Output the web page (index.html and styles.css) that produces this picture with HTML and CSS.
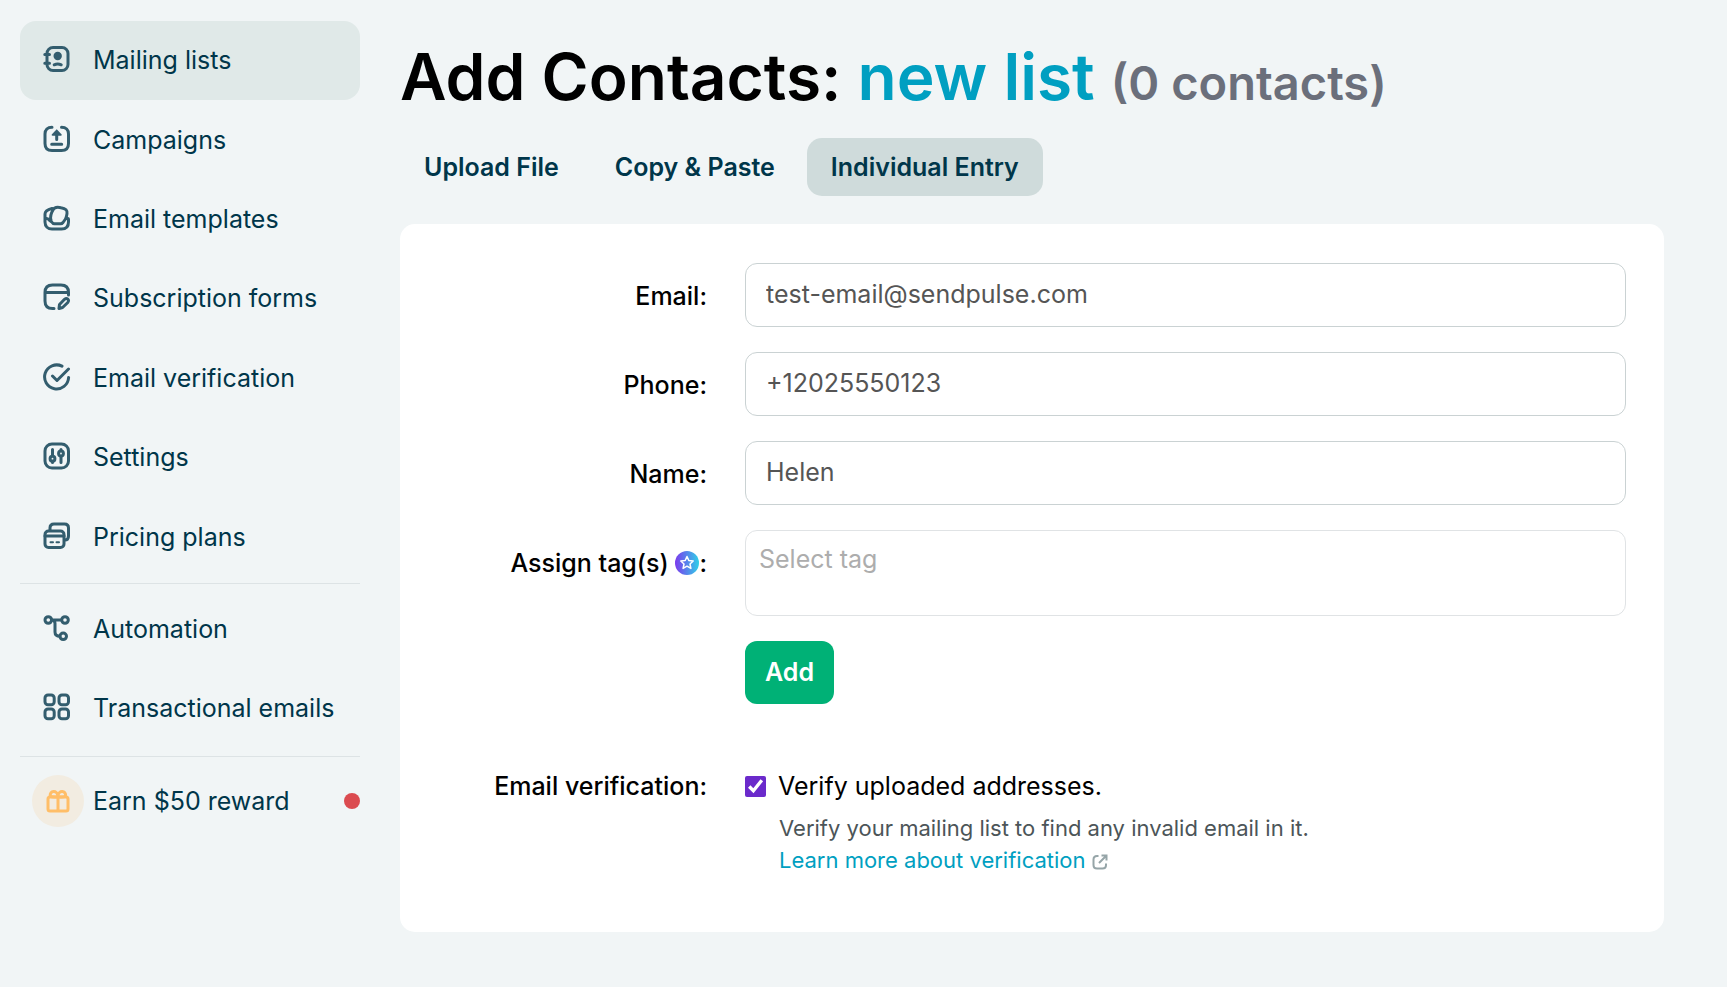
FILE: index.html
```html
<!DOCTYPE html>
<html lang="en">
<head>
  <meta charset="UTF-8">
  <meta name="viewport" content="width=device-width, initial-scale=1.0">
  <title>Add Contacts</title>
  <link rel="stylesheet" href="styles.css">
</head>
<body>
  <div class="layout">
    <nav class="sidebar">
      <div class="nav-group nav-main">
        <a href="#" class="nav-item active">
          <svg class="icon" viewBox="0 0 28 28"><rect x="4" y="2.5" width="21" height="23" rx="6"/><path d="M1.8 9.5h4.7M1.8 18.3h4.7M11.2 19.8q3.5-1.8 7 0"/><circle class="fill" cx="14.7" cy="11" r="4.2"/></svg>
          <span>Mailing lists</span>
        </a>
        <a href="#" class="nav-item">
          <svg class="icon" viewBox="0 0 28 28"><path d="M9 2.3C4.5 2.3 2 5 2 9v9.5c0 4.5 2.5 7 7 7h9.5c4.5 0 7-2.5 7-7V9c0-4-2.5-6.7-7-6.7M13.7 8v6.5M8.7 19.2h10"/><path class="fill" d="M13.7 4.3l5 5.2q.3 1.3-1 1.3H9.7q-1.3 0-1-1.3z"/></svg>
          <span>Campaigns</span>
        </a>
        <a href="#" class="nav-item">
          <svg class="icon" viewBox="0 0 28 28"><path d="M2 15.5V10c0-3.5 3-4.5 7-5.5M2 15.5V18c0 4.5 3 7 7 7h9.5c4.5 0 7-2.5 7-7v-3c0-1-2-1.3-3 0l-2.5 3.5c-.8 1-1.5 1.3-2.5 1.3h-6c-1.5 0-2.2-.7-3-2L6.2 16C5 14 2 14 2 15.5M8 16c-1-3 .5-7.5 2-10 1.5-3.5 5-3 8-2.3 5 .8 6.5 2.5 6 6-.2 2-.7 3.5-1.5 5.3"/></svg>
          <span>Email templates</span>
        </a>
        <a href="#" class="nav-item">
          <svg class="icon" viewBox="0 0 28 28"><path d="M11 25.5H9.5c-4.8 0-7.5-2.7-7.5-7.5V9.5C2 4.7 4.7 2 9.5 2H18c4.8 0 7.5 2.7 7.5 7.5V12M2 9.5h23.5M16 25.5l.5-4 5-5.2c2.5-2 5.2.5 3.3 3.2l-5.2 5z"/></svg>
          <span>Subscription forms</span>
        </a>
        <a href="#" class="nav-item">
          <svg class="icon" viewBox="0 0 28 28"><path d="M19 3.2A12 12 0 1 0 25.6 14.5M9.5 13l4.5 4.5L25.5 6"/></svg>
          <span>Email verification</span>
        </a>
        <a href="#" class="nav-item">
          <svg class="icon" viewBox="0 0 28 28"><rect x="2" y="2" width="23.5" height="24" rx="7"/><path d="M9.5 7.5v6M9.5 19.5v1M18 7.5v1M18 14.5v6"/><circle cx="9.5" cy="16.7" r="2.4"/><circle cx="18" cy="11.5" r="2.4"/></svg>
          <span>Settings</span>
        </a>
        <a href="#" class="nav-item">
          <svg class="icon" viewBox="0 0 28 28"><path d="M7 8V6c0-2.5 1.5-4 4-4h10.5c2.5 0 4 1.5 4 4v8c0 2.5-1.3 4-3.7 4M2 14h19"/><rect x="2" y="9" width="19" height="16.5" rx="3.5"/><path class="thin" d="M7.5 20.3h2.5M13.5 20.3h2.5"/></svg>
          <span>Pricing plans</span>
        </a>
      </div>
      <div class="nav-group nav-extra">
        <a href="#" class="nav-item">
          <svg class="icon" viewBox="0 0 28 28"><circle cx="5.3" cy="6" r="3.3"/><circle cx="22" cy="6" r="3.3"/><circle cx="20.2" cy="22.3" r="3.3"/><path d="M8.6 6h10M9.5 6c2 .5 2.5 1.5 2.5 3.5v8.5c0 3 1.5 4.3 5 4.3"/></svg>
          <span>Automation</span>
        </a>
        <a href="#" class="nav-item">
          <svg class="icon" viewBox="0 0 28 28"><rect x="2" y="2" width="9.2" height="9.7" rx="3"/><rect x="16" y="2" width="9.5" height="9.7" rx="3"/><rect x="2" y="16" width="9.2" height="9.7" rx="3"/><rect x="16" y="16" width="9.5" height="9.7" rx="3"/></svg>
          <span>Transactional emails</span>
        </a>
      </div>
      <a href="#" class="nav-item reward">
        <span class="gift">
          <svg viewBox="0 0 24 24"><rect x="2" y="8" width="20" height="14" rx="2"/><path d="M12 8v14M11.5 8C9 8 5 8 4.2 7c-.7-5.5 7-6.5 7.6 0M12.2 8c2.5 0 6.5 0 7.4-1 .7-5.5-7-6.5-7.6 0"/></svg>
        </span>
        <span>Earn $50 reward</span>
        <span class="dot"></span>
      </a>
    </nav>

    <main class="content">
      <h1>Add Contacts: <span class="list-name">new list</span> <small>(0 contacts)</small></h1>

      <div class="tabs">
        <a href="#" class="tab">Upload File</a>
        <a href="#" class="tab">Copy &amp; Paste</a>
        <a href="#" class="tab active">Individual Entry</a>
      </div>

      <form class="card">
        <div class="form-row">
          <label for="email">Email:</label>
          <input class="field" type="text" id="email" value="test-email@sendpulse.com">
        </div>
        <div class="form-row">
          <label for="phone">Phone:</label>
          <input class="field" type="text" id="phone" value="+12025550123">
        </div>
        <div class="form-row">
          <label for="name">Name:</label>
          <input class="field" type="text" id="name" value="Helen">
        </div>
        <div class="form-row">
          <label for="tags">Assign tag(s)
            <svg class="star" viewBox="0 0 24 24">
              <defs>
                <linearGradient id="starGradient" x1="0" y1="0" x2="1" y2="0"><stop offset="0" stop-color="#7c3aed"/><stop offset="1" stop-color="#2fd0e8"/></linearGradient>
              </defs>
              <circle cx="12" cy="12" r="12" fill="url(#starGradient)"/>
              <path d="M12 5.5l1.8 4 4.4.5-3.2 3 .9 4.4-3.9-2.2-3.9 2.2.9-4.4-3.2-3 4.4-.5z" fill="none" stroke="#fff" stroke-width="1.5" stroke-linejoin="round"/>
            </svg>:</label>
          <textarea class="field tags" id="tags" placeholder="Select tag"></textarea>
        </div>
        <div class="form-row">
          <button type="button" class="btn-add">Add</button>
        </div>
        <div class="form-row verify">
          <span class="row-title">Email verification:</span>
          <div>
            <label class="check"><input type="checkbox" checked>Verify uploaded addresses.</label>
            <p class="help">Verify your mailing list to find any invalid email in it.<br>
              <a href="#">Learn more about verification</a>
              <svg class="external" viewBox="0 0 16 16"><path d="M6.5 2H5Q1.5 2 1.5 5.5v5.5Q1.5 14.5 5 14.5h5.5Q14 14.5 14 11V9.5M9.5 1.5h5v5M14.5 1.5L7 9"/></svg>
            </p>
          </div>
        </div>
      </form>
    </main>
  </div>
</body>
</html>
```

FILE: styles.css
```css
* {
  box-sizing: border-box;
}

body {
  margin: 0;
  background: #f1f5f6;
  color: #000;
  font-family: Inter, "Open Sans", sans-serif;
  font-size: 25px;
  line-height: 32px;
}

a {
  text-decoration: none;
}

.layout {
  display: flex;
  gap: 40px;
  padding: 21px 63px 55px 20px;
}

/* sidebar */
.sidebar {
  flex: 0 0 340px;
}

.nav-group {
  display: grid;
  grid-auto-rows: 1fr;
  border-bottom: 1px solid #dde3e5;
}

.nav-main {
  height: 563px;
  padding-bottom: 6px;
}

.nav-extra {
  height: 173px;
  padding: 6px 0 8px;
}

.nav-item {
  display: flex;
  align-items: center;
  gap: 22px;
  padding: 0 0 3px 23px;
  border-radius: 16px;
  color: #00364a;
  white-space: nowrap;
}

.nav-item.active {
  background: #e0e9e8;
}

.icon {
  flex: none;
  width: 28px;
  height: 28px;
  fill: none;
  stroke: #335d6e;
  stroke-width: 3;
  stroke-linecap: round;
  stroke-linejoin: round;
}

.icon + span {
  padding-top: 2px;
}

.icon .fill {
  fill: #335d6e;
  stroke: none;
}

.icon .thin {
  stroke-width: 2;
}

.nav-item.reward {
  gap: 9px;
  margin-top: 18px;
  padding: 0 0 0 12px;
}

.gift {
  display: flex;
  align-items: center;
  justify-content: center;
  width: 52px;
  height: 52px;
  border-radius: 50%;
  background: #f2ece1;
}

.gift svg {
  width: 24px;
  height: 24px;
  fill: none;
  stroke: #ffbe68;
  stroke-width: 3;
  stroke-linejoin: round;
}

.dot {
  width: 16px;
  height: 16px;
  margin-left: auto;
  border-radius: 50%;
  background: #db4b50;
}

/* content */
.content {
  flex: 1;
  min-width: 0;
}

h1 {
  margin: 15px 0 14px;
  font-size: 64px;
  font-weight: 600;
  line-height: 82px;
}

.list-name {
  color: #009fc1;
}

h1 small {
  color: #6b6f7b;
  font-size: 47px;
}

.tabs {
  display: flex;
  gap: 8px;
  margin-bottom: 28px;
}

.tab {
  padding: 13px 24px;
  border-radius: 15px;
  color: #00364a;
  font-weight: 600;
}

.tab.active {
  background: #cfdbdb;
}

.card {
  display: flex;
  flex-direction: column;
  gap: 25px;
  padding: 39px 38px 56px 0;
  border-radius: 15px;
  background: #fff;
}

.form-row {
  display: grid;
  grid-template-columns: 307px 1fr;
  column-gap: 38px;
}

.form-row > label,
.row-title {
  padding-top: 17px;
  font-weight: 500;
  text-align: right;
}

.field {
  width: 100%;
  height: 64px;
  padding: 0 20px 2px;
  border: 1px solid #cad2d3;
  border-radius: 12px;
  background: #fff;
  color: #555;
  font: inherit;
}

.tags {
  display: block;
  height: 86px;
  padding: 12px 13px;
  border-color: #e0e3e5;
  resize: none;
}

.tags::placeholder {
  color: #adadad;
}

.star {
  width: 24px;
  height: 24px;
  vertical-align: -3px;
}

.btn-add {
  grid-column: 2;
  justify-self: start;
  height: 63px;
  padding: 0 20px 2px;
  border: 0;
  border-radius: 12px;
  background: #00b176;
  color: #fff;
  font: inherit;
  font-weight: 600;
}

.verify {
  margin-top: 45px;
}

.verify .row-title {
  padding-top: 0;
  margin-top: -4px;
}

.check {
  display: flex;
  align-items: center;
  gap: 12px;
  margin-top: -4px;
}

.check input {
  width: 21px;
  height: 21px;
  margin: 0;
  accent-color: #6b2acb;
}

.help {
  margin: 10px 0 0;
  padding-left: 34px;
  color: #4c5558;
  font-size: 22px;
}

.help a {
  color: #009fc1;
}

.external {
  width: 16px;
  height: 16px;
  vertical-align: -2px;
  fill: none;
  stroke: #96a5a8;
  stroke-width: 2;
}
```
